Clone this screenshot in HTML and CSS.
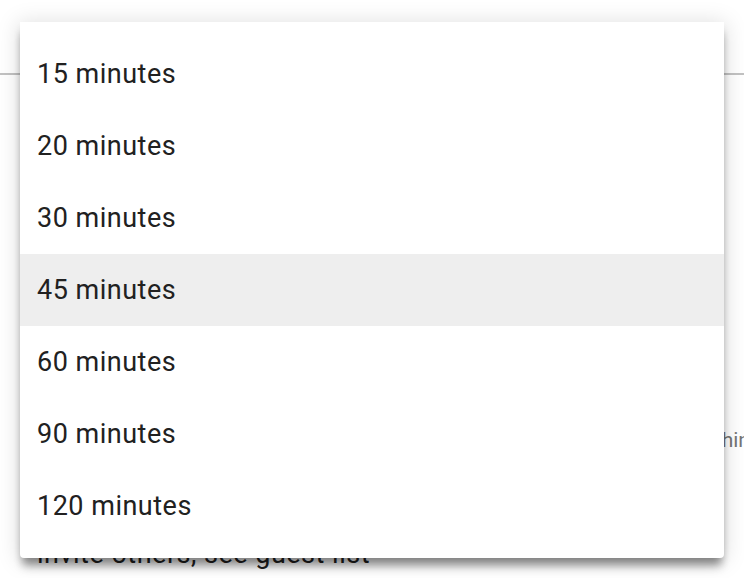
FILE: index.html
```html
<!DOCTYPE html>
<html lang="en">
<head>
<meta charset="utf-8">
<title>Duration menu</title>
<link rel="stylesheet" href="styles.css">
</head>
<body>
<div class="page">
  <div class="field-line"></div>
  <div class="hint">Guests can join within</div>
  <div class="invite">invite others, see guest list</div>

  <ul class="menu" role="listbox">
    <li class="item">15 minutes</li>
    <li class="item">20 minutes</li>
    <li class="item">30 minutes</li>
    <li class="item active">45 minutes</li>
    <li class="item">60 minutes</li>
    <li class="item">90 minutes</li>
    <li class="item">120 minutes</li>
  </ul>
</div>
</body>
</html>
```

FILE: styles.css
```css
html, body {
  margin: 0;
  padding: 0;
  background: #ffffff;
}
body {
  width: 744px;
  height: 578px;
  overflow: hidden;
  font-family: Roboto, "Noto Sans", "Liberation Sans", sans-serif;
}
.page {
  position: relative;
  width: 744px;
  height: 578px;
  overflow: hidden;
  padding-top: 73px;
  box-sizing: border-box;
}
.field-line {
  height: 2px;
  background: #c2c2c2;
}
.hint {
  margin-top: 353px;
  height: 24px;
  line-height: 24px;
  font-size: 21px;
  color: #757575;
  white-space: nowrap;
  padding-left: 545px;
}
.invite {
  margin-top: 87px;
  padding-left: 37px;
  height: 30px;
  line-height: 30px;
  font-size: 27px;
  letter-spacing: 0.5px;
  color: #212121;
  white-space: nowrap;
}
.menu {
  position: absolute;
  left: 20px;
  top: 22px;
  width: 704px;
  margin: 0;
  padding: 16px 0;
  list-style: none;
  background: #ffffff;
  border-radius: 0 0 4px 4px;
  box-shadow: 0 11px 10px -3px rgba(0, 0, 0, 0.32),
              0 6px 8px -2px rgba(0, 0, 0, 0.2),
              0 2px 22px 2px rgba(0, 0, 0, 0.13);
}
.item {
  height: 72px;
  display: flex;
  align-items: center;
  padding: 0 17px;
  font-size: 27px;
  letter-spacing: 0.5px;
  color: #212121;
}
.item.active {
  background: #eeeeee;
}
```
